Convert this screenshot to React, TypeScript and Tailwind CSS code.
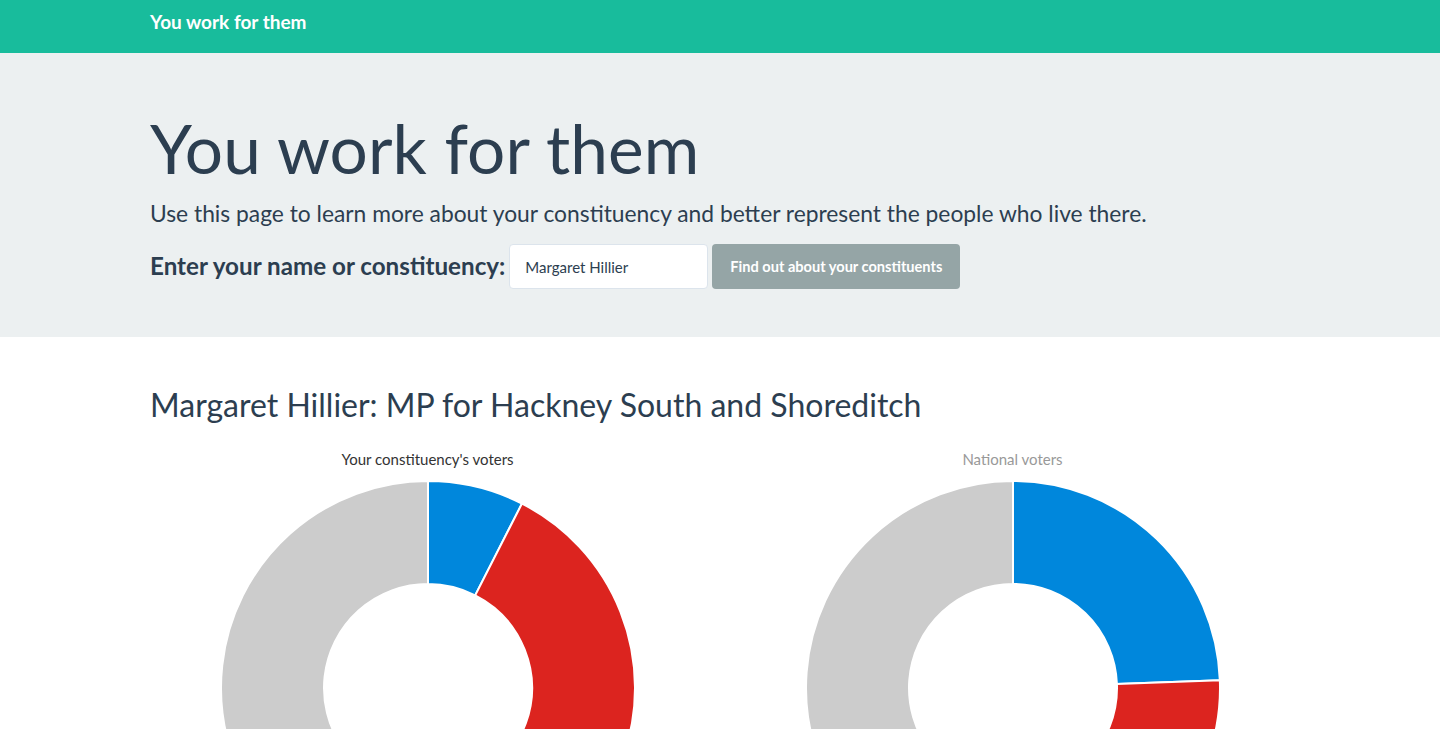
type Slice = { value: number; color: string }

const lato = { fontFamily: "Lato, 'Open Sans', sans-serif" }

function arc(cx: number, cy: number, r: number, ri: number, a0: number, a1: number) {
  const p = (rad: number, a: number) => {
    const t = (a * Math.PI) / 180
    return `${cx + rad * Math.sin(t)} ${cy - rad * Math.cos(t)}`
  }
  const large = a1 - a0 > 180 ? 1 : 0
  return `M ${p(r, a0)} A ${r} ${r} 0 ${large} 1 ${p(r, a1)} L ${p(ri, a1)} A ${ri} ${ri} 0 ${large} 0 ${p(ri, a0)} Z`
}

function Donut({ title, slices, muted }: { title: string; slices: Slice[]; muted?: boolean }) {
  const total = slices.reduce((s, x) => s + x.value, 0)
  let start = 0
  return (
    <div className="flex flex-col items-center">
      <p className={`text-[15px] leading-5 h-5 ${muted ? "text-[#999999]" : "text-[#333333]"}`}>{title}</p>
      <svg width="416" height="416" viewBox="0 0 416 416" className="mt-[11px] shrink-0">
        {slices.map((s, i) => {
          const a0 = start
          const a1 = start + (s.value / total) * 360
          start = a1
          return <path key={i} d={arc(208, 208, 207, 104, a0, a1)} fill={s.color} stroke="#ffffff" strokeWidth="2" />
        })}
      </svg>
    </div>
  )
}

export default function App() {
  return (
    <div className="min-h-screen bg-white text-[#2c3e50]" style={lato}>
      <nav className="h-[53px] bg-[#18bc9c]">
        <div className="w-[1170px] mx-auto px-[15px] pt-[10px]">
          <span className="text-[19px] font-bold text-white leading-6">You work for them</span>
        </div>
      </nav>

      <div className="bg-[#ecf0f1] h-[284px]">
        <div className="w-[1170px] mx-auto px-[15px] pt-[58px]">
          <h1 className="text-[67.5px] leading-[74px] tracking-[0.1px]">You work for them</h1>
          <p className="text-[22.8px] leading-8 mt-[12px]">
            Use this page to learn more about your constituency and better represent the people who live there.
          </p>
          <div className="flex items-center mt-[15px]">
            <label className="text-[24.2px] font-bold mr-[4px]">Enter your name or constituency:</label>
            <input
              defaultValue="Margaret Hillier"
              className="w-[199px] h-[45px] bg-white border border-[#dce4ec] rounded-[4px] px-[15px] text-[15px] text-[#2c3e50] outline-none"
              style={lato}
            />
            <button className="ml-[4px] h-[45px] w-[248px] bg-[#95a5a6] rounded-[4px] text-white text-[14.6px] font-bold" style={lato}>
              Find out about your constituents
            </button>
          </div>
        </div>
      </div>

      <div className="w-[1170px] mx-auto px-[15px] pt-[50px]">
        <h2 className="text-[32px] leading-[35px]">Margaret Hillier: MP for Hackney South and Shoreditch</h2>
        <div className="grid grid-cols-2 -mx-[15px] mt-[27px] h-[360px] overflow-hidden">
          <Donut
            title="Your constituency's voters"
            slices={[
              { value: 7.5, color: "#0087dc" },
              { value: 46, color: "#dc241f" },
              { value: 46.5, color: "#cccccc" },
            ]}
          />
          <Donut
            title="National voters"
            muted
            slices={[
              { value: 24.4, color: "#0087dc" },
              { value: 28, color: "#dc241f" },
              { value: 47.6, color: "#cccccc" },
            ]}
          />
        </div>
      </div>
    </div>
  )
}
